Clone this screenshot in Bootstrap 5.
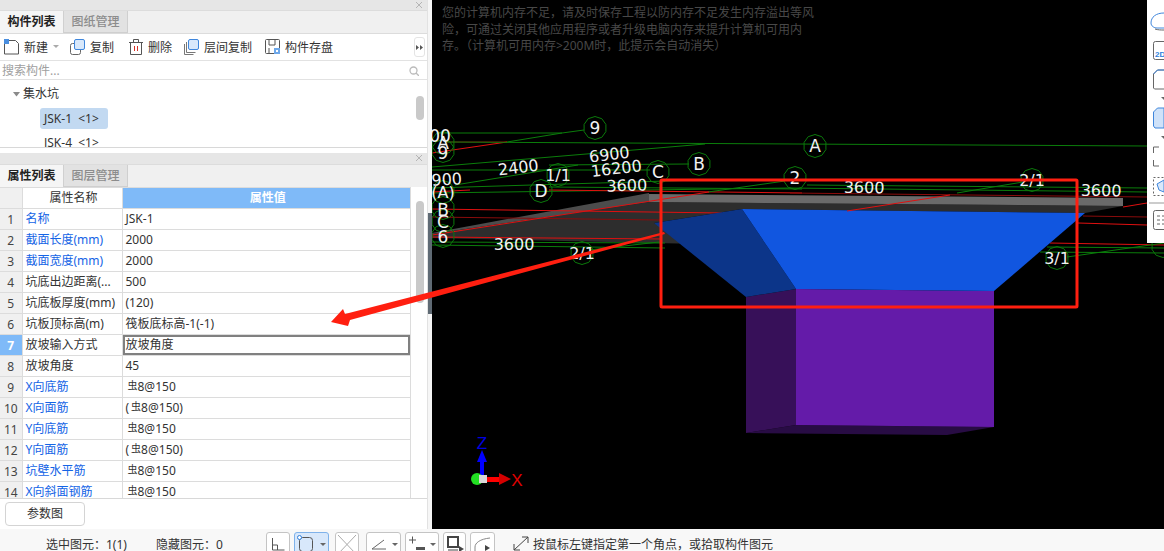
<!DOCTYPE html>
<html lang="zh">
<head>
  <meta charset="UTF-8">
  <title>构件列表</title>
  <link href="https://cdn.jsdelivr.net/npm/bootstrap@5.3.3/dist/css/bootstrap.min.css" rel="stylesheet">
  <style>
    html, body { height: 551px; overflow: hidden; }
    body { font: 12px/1.2 "Noto Sans", "Noto Sans CJK SC", sans-serif; color: #333; background: #fff; }
    .app-shell { width: 1164px; height: 551px; position: relative; overflow: hidden; }
    .main-area { height: 529px; }
    .left-side { width: 432px; flex: none; background: #fff; }
    .side-inner { width: 428px; flex: none; border-right: 1px solid #e2e2e2; }
    .splitter { width: 4px; flex: none; background: #f6f6f6; position: relative; }
    .splitter-grip { position: absolute; left: 0; top: 213px; width: 4px; height: 101px; background: #5f6a74; }
    .dock-bar { height: 10px; background: #e6e6e6; position: relative; }
    .dock-low { height: 11px; }
    .close-x { position: absolute; right: 3px; top: 0; width: 10px; height: 10px; stroke: #b5b5b5; }
    .tab-row { height: 23px; background: #f0f0f0; border-top: 1px solid #dcdcdc; }
    .tab-on, .tab-off { width: 64px; height: 22px; font-size: 12px; line-height: 21px; text-align: center; }
    .tab-on { color: #222; font-weight: 700; background: #f5f5f5; border-right: 1px solid #d0d0d0; }
    .tab-off { color: #8c8c8c; font-weight: 500; background: #e2e2e2; border-right: 1px solid #cfcfcf; border-bottom: 1px solid #cfcfcf; }
    .tool-row { height: 28px; background: #fff; border-top: 1px solid #dcdcdc; border-bottom: 1px solid #e2e2e2; padding: 1px 0 0 4px; position: relative; }
    .tool-item { gap: 5px; font-size: 12px; color: #333; margin-right: 13px; }
    .tool-item span { padding-top: 2px; }
    .tool-first { gap: 5px; margin-right: 11px; }
    .tool-wide { margin-right: 15px; }
    .tool-tight { margin-right: 12px; }
    .tool-more { position: absolute; right: 2px; top: 3px; width: 11px; height: 20px; border: 1px solid #e4e4e4; border-radius: 3px; }
    .search-row { height: 19px; background: #fff; border-bottom: 1px solid #e2e2e2; padding: 2px 8px 0 2px; color: #a0a0a0; }
    .tree-box { height: 68px; background: #fff; border-bottom: 1px solid #d8d8d8; position: relative; overflow: hidden; }
    .tree-head { position: absolute; left: 13px; top: 7px; font-size: 12px; gap: 3px; }
    .tree-node { position: absolute; left: 40px; width: 68px; height: 21px; line-height: 21px; padding-left: 4px; white-space: pre; }
    .node-on { top: 28px; background: #c2d9f1; border-radius: 3px; }
    .node-off { top: 52px; }
    .thumb { position: absolute; width: 8px; background: #c9c9c9; border-radius: 4px; }
    .thumb-tree { right: 3px; top: 16px; height: 24px; }
    .side-gap { height: 5px; background: #fff; }
    .prop-box { height: 312px; background: #fff; border-bottom: 1px solid #d8d8d8; position: relative; overflow: hidden; }
    .thumb-prop { left: 416px; top: 14px; height: 102px; }
    .prop-table { width: 411px; table-layout: fixed; border-collapse: collapse; margin: 0; font-size: 12px; }
    .prop-table td, .prop-table th { height: 21px; padding: 0 0 1px 3px; border: 1px solid #dcdcdc; font-weight: 400; white-space: nowrap; overflow: hidden; color: #333; line-height: 17px; vertical-align: middle; }
    .prop-table .num-cell { width: 22px; padding: 0; text-align: center; background: #f0f0f0; color: #444; border-left: 0; }
    .prop-table .name-cell { width: 100px; }
    .prop-table th.name-cell { text-align: center; }
    .prop-table th.value-cell { background: #7fbaf8; color: #fff; font-weight: 700; text-align: center; }
    .prop-table .link-name { color: #1464e6; }
    .prop-table .num-on { background: #7fbaf8; color: #fff; font-weight: 700; }
    .prop-table .cell-edit { box-shadow: inset 0 0 0 2px #808080; }
    .bar-sym { font-size: 10px; position: relative; top: -2px; margin-left: 2px; }
    .param-row { height: 30px; background: #fff; padding: 3px 0 0 5px; }
    .param-btn { width: 80px; height: 24px; padding: 0; font-size: 12px; color: #333; background: #fff; border: 1px solid #d4d4d4; border-radius: 4px; }
    .canvas-area { background: #000; position: relative; overflow: hidden; }
    .canvas-svg { position: absolute; left: 0; top: 0; }
    .canvas-svg .grid-labels text { font-family: "DejaVu Sans", sans-serif; }
    .axis-label { font-family: "Liberation Sans", sans-serif; font-size: 17px; }
    .mem-note { position: absolute; left: 10px; top: 5px; width: 373px; color: #484848; font-size: 12px; line-height: 16.500px; }
    .view-tools { position: absolute; right: 0; top: 0; width: 17px; height: 243px; background: #fff; }
    .status-bar { height: 22px; background: #f8f8f8; position: relative; font-size: 12px; color: #333; }
    .status-text { position: absolute; top: 9px; white-space: nowrap; }
    .stat-a { left: 46px; }
    .stat-b { left: 156px; }
    .stat-c { left: 533px; }
    .status-icons { position: absolute; left: 266px; top: 3px; gap: 4px; }
    .stat-btn { height: 24px; background: #fff; border: 1px solid #c4c4c4; border-radius: 3px; }
    .stat-on { background: #d8e8fb; border-color: #7fb2ea; }
    .stat-gap { margin-left: 2px; }
    .stat-gap-b { margin-left: 3px; }
    .corner-arrows { position: absolute; left: 513px; top: 7px; }
    .arrow-layer { position: absolute; left: 0; top: 0; pointer-events: none; }
  </style>
</head>
<body>
<div class="app-shell">
  <div class="main-area d-flex">
    <div class="left-side d-flex">
      <div class="side-inner">
        <div class="dock-bar"><svg class="close-x" viewBox="0 0 10 10"><path d="M2 2l6 6M8 2l-6 6"/></svg></div>
        <div class="tab-row d-flex">
          <div class="tab-on">构件列表</div>
          <div class="tab-off">图纸管理</div>
        </div>
        <div class="tool-row d-flex align-items-center">
          <div class="tool-item tool-first d-flex align-items-center">
            <svg width="15" height="16" viewBox="0 0 15 16"><path d="M.5 4.500v10.500h14V4.500l-3-3H5" fill="#fff" stroke="#555"/><rect x="0" y="0" width="5" height="5" fill="#4a8fe0"/></svg>
            <span>新建</span>
            <svg class="me-0" width="6" height="4" viewBox="0 0 6 4"><path d="M0 0h6L3 3z" fill="#aaa"/></svg>
          </div>
          <div class="tool-item tool-wide d-flex align-items-center">
            <svg width="15" height="16" viewBox="0 0 15 16"><rect x=".5" y="4.500" width="10" height="11" rx="2" fill="#fff" stroke="#666"/><rect x="4.500" y=".5" width="10" height="10" rx="1.500" fill="#d8e8fb" stroke="#3f86dc"/></svg>
            <span>复制</span>
          </div>
          <div class="tool-item tool-tight d-flex align-items-center">
            <svg width="14" height="16" viewBox="0 0 14 16"><path d="M0 3.500h14M4.500 3.500v-3h5v3M1.500 3.500v12h11v-12" fill="none" stroke="#555"/><path d="M5.500 7v5M8.500 7v5" stroke="#d93025"/></svg>
            <span>删除</span>
          </div>
          <div class="tool-item d-flex align-items-center">
            <svg width="15" height="16" viewBox="0 0 15 16"><path d="M.5 5v10.500h9M2.500 3v10.500h9" fill="none" stroke="#777"/><rect x="4.500" y=".5" width="10" height="10" rx="1.500" fill="#d8e8fb" stroke="#3f86dc"/></svg>
            <span>层间复制</span>
          </div>
          <div class="tool-item d-flex align-items-center">
            <svg width="15" height="16" viewBox="0 0 15 16"><rect x=".5" y=".5" width="14" height="14" rx="1" fill="#fff" stroke="#555"/><path d="M4 1v5h6V1M4 15V9" fill="none" stroke="#555"/><rect x="9" y="9" width="6" height="6" fill="#6ea8ea"/><rect x="11" y="11" width="2" height="2" fill="#fff"/></svg>
            <span>构件存盘</span>
          </div>
          <div class="tool-more d-flex align-items-center justify-content-center">
            <svg width="7" height="5" viewBox="0 0 7 5"><path d="M0 0l3 2.500-3 2.500zM4 0l3 2.500-3 2.500z" fill="#555"/></svg>
          </div>
        </div>
        <div class="search-row d-flex align-items-center justify-content-between">
          <span>搜索构件...</span>
          <svg width="10" height="10" viewBox="0 0 10 10"><circle cx="4.500" cy="4.500" r="3.500" fill="none" stroke="#bbb" stroke-width="1.300"/><path d="M7 7l3 3" stroke="#bbb" stroke-width="1.300"/></svg>
        </div>
        <div class="tree-box">
          <div class="tree-head d-flex align-items-center">
            <svg width="7" height="5" viewBox="0 0 7 5"><path d="M0 0h7L3.500 4.500z" fill="#8a8a8a"/></svg>
            <span>集水坑</span>
          </div>
          <div class="tree-node node-on">JSK-1  &lt;1&gt;</div>
          <div class="tree-node node-off">JSK-4  &lt;1&gt;</div>
          <div class="thumb thumb-tree"></div>
        </div>
        <div class="side-gap"></div>
        <div class="dock-bar dock-low"><svg class="close-x" viewBox="0 0 10 10"><path d="M2 2l6 6M8 2l-6 6"/></svg></div>
        <div class="tab-row d-flex">
          <div class="tab-on">属性列表</div>
          <div class="tab-off">图层管理</div>
        </div>
        <div class="prop-box">
          <table class="table prop-table">
            <thead>
              <tr><th class="num-cell"></th><th class="name-cell">属性名称</th><th class="value-cell">属性值</th></tr>
            </thead>
            <tbody id="prop-rows"></tbody>
          </table>
          <div class="thumb thumb-prop"></div>
        </div>
        <div class="param-row">
          <button type="button" class="btn param-btn">参数图</button>
        </div>
      </div>
      <div class="splitter"><div class="splitter-grip"></div></div>
    </div>
    <div class="canvas-area flex-grow-1">
      <svg class="canvas-svg" width="732" height="529" viewBox="432 0 732 529">
        <!-- slab -->
        <polygon points="432,234 649,202 1123,206 1085,213 742,209 654,223 700,244 432,238" fill="#2d2d2d"/>
        <polygon points="432,233 649,193 649,202 432,234" fill="#4c4c4c"/>
        <polygon points="649,194 1123,198 1123,206 649,202" fill="#6a6a6a"/>
        <g id="grid-lines" fill="none" stroke-width="1"></g>
        <!-- pit body -->
        <polygon points="746,433 796,425 994,427 947,435" fill="#280c44"/>
        <polygon points="746,297 796,289 796,425 746,433" fill="#371059"/>
        <polygon points="796,289 994,291 994,427 796,425" fill="#641ba9"/>
        <polygon points="654,223 742,209 796,289 746,297" fill="#0c3589"/>
        <polygon points="742,209 1085,213 994,291 796,289" fill="#1156e0"/>
        <path d="M847 211L950 195" stroke="#e01010"/>
        <g id="grid-bubbles" fill="none" stroke="#0b7a0b"></g>
        <g id="grid-text" class="grid-labels" fill="#f2f2f2" text-anchor="middle" font-size="16"></g>
        <!-- axes -->
        <path d="M482 476V462" stroke="#0000ff" stroke-width="4"/>
        <polygon points="482,450 477,462 487,462" fill="#0000ff"/>
        <path d="M487 479.500h12" stroke="#ff0000" stroke-width="5"/>
        <polygon points="511,479 499,473 499,485" fill="#d40000"/>
        <circle cx="477" cy="479" r="6" fill="#22e022"/>
        <rect x="479" y="475" width="8" height="8" fill="#d8d8d8"/>
        <text class="axis-label" x="482" y="449" fill="#0000e0" text-anchor="middle">Z</text>
        <text class="axis-label" x="517" y="486" fill="#e00000" text-anchor="middle">X</text>
      </svg>
      <div class="mem-note">您的计算机内存不足，请及时保存工程以防内存不足发生内存溢出等风险，可通过关闭其他应用程序或者升级电脑内存来提升计算机可用内存。（计算机可用内存&gt;200M时，此提示会自动消失）</div>
      <div class="view-tools">
        <svg width="17" height="243" viewBox="0 0 17 243" fill="none">
          <path d="M17 13c-8 0-13 4-13 10 0 3 3 5 6 5h7" stroke="#3f86dc"/>
          <path d="M8 29c3 1 6 1 9 1" stroke="#666"/>
          <rect x="6.500" y="41.500" width="20" height="18" rx="2" stroke="#666"/>
          <text x="8" y="57" fill="#2f7fdc" font-size="8" font-weight="700" font-family="Liberation Sans, sans-serif">2D</text>
          <path d="M6.500 88V74l4-4H17M6.500 88l1 1H17" stroke="#666"/><path d="M6.500 74l4-4H17" stroke="#3f86dc"/>
          <path d="M14 97h3v3z" fill="#666"/>
          <path d="M6.500 126v-14l4-4H17v20H8z" fill="#cfe2f9" stroke="#3f86dc"/>
          <path d="M14 136h3v3z" fill="#666"/>
          <path d="M12 147H6.500v6M6.500 160v6H12" stroke="#666"/>
          <rect x="6.500" y="177.500" width="20" height="18" stroke="#666" stroke-dasharray="2 2"/>
          <path d="M10 184l7-4v12l-5-2z" fill="#d8e8fb" stroke="#3f86dc"/>
          <path d="M2 203h15" stroke="#999"/>
          <rect x="6.500" y="210.500" width="20" height="19" rx="2" stroke="#666"/>
          <path d="M10 216h3M15 216h2M10 220h3M15 220h2M10 224h3M15 224h2" stroke="#666"/>
        </svg>
      </div>
    </div>
  </div>
  <div class="status-bar">
    <span class="status-text stat-a">选中图元：1(1)</span>
    <span class="status-text stat-b">隐藏图元：0</span>
    <div class="status-icons d-flex">
      <div class="stat-btn"><svg width="22" height="22" viewBox="0 0 22 22" fill="none" stroke="#555"><path d="M5.500 5v12h12M5.500 12h5v5"/></svg></div>
      <div class="stat-btn stat-on"><svg width="33" height="22" viewBox="0 0 33 22" fill="none"><rect x="4.500" y="4.500" width="13" height="14" rx="3" stroke="#555"/><circle cx="4.500" cy="4.500" r="2" fill="#fff" stroke="#2f7fdc"/><path d="M25 10h6l-3 3z" fill="#666"/></svg></div>
      <div class="stat-btn stat-gap"><svg width="22" height="22" viewBox="0 0 22 22" fill="none" stroke="#aaa"><path d="M2 2l18 19M20 2L2 21"/></svg></div>
      <div class="stat-btn stat-gap-b"><svg width="33" height="22" viewBox="0 0 33 22" fill="none"><path d="M5 16L17 7M5 16h14" stroke="#666"/><rect x="5" y="18" width="14" height="2" fill="#aaa"/><path d="M25 10h6l-3 3z" fill="#666"/></svg></div>
      <div class="stat-btn"><svg width="32" height="22" viewBox="0 0 32 22" fill="none"><path d="M3 7h7M6.500 3.500v7" stroke="#555"/><rect x="10" y="14" width="9" height="3" fill="#555"/><path d="M24 10h6l-3 3z" fill="#666"/></svg></div>
      <div class="stat-btn"><svg width="21" height="22" viewBox="0 0 21 22" fill="none"><rect x="4" y="4" width="10" height="10" stroke="#444" stroke-width="2"/><path d="M4 17h10" stroke="#444"/><path d="M15 13l5 3-5 3z" fill="#444"/></svg></div>
      <div class="stat-btn"><svg width="23" height="22" viewBox="0 0 23 22" fill="none"><path d="M4 20v-6c0-4 5-8 15-9" stroke="#888"/><path d="M14 12l5 3-5 3z" fill="#444"/></svg></div>
    </div>
    <svg class="corner-arrows" width="16" height="15" viewBox="0 0 16 15" fill="none" stroke="#444"><path d="M1 14L15 1M9 1h6v6M1 8v6h6"/></svg>
    <span class="status-text stat-c">按鼠标左键指定第一个角点，或拾取构件图元</span>
  </div>
  <!-- annotation arrow runs over the panel and the canvas -->
  <svg class="arrow-layer" width="1164" height="551" viewBox="0 0 1164 551">
    <polygon points="331,322 343,309 345,314 664,232 665,234 350,320 348,326" fill="#ff1f10"/>
    <rect x="661" y="180" width="416" height="127" rx="1" fill="none" stroke="#ff1f10" stroke-width="3"/>
  </svg>
</div>

<script>
  const rows = [
    ['名称', 'JSK-1', 1], ['截面长度(mm)', '2000', 1], ['截面宽度(mm)', '2000', 1],
    ['坑底出边距离(...', '500', 0], ['坑底板厚度(mm)', '(120)', 0], ['坑板顶标高(m)', '筏板底标高-1(-1)', 0],
    ['放坡输入方式', '放坡角度', 0], ['放坡角度', '45', 0],
    ['X向底筋', '#8@150', 1], ['X向面筋', '(#8@150)', 1], ['Y向底筋', '#8@150', 1], ['Y向面筋', '(#8@150)', 1],
    ['坑壁水平筋', '#8@150', 1], ['X向斜面钢筋', '#8@150', 1]
  ];
  document.getElementById('prop-rows').innerHTML = rows.map((r, i) => {
    const on = i === 6;
    const val = r[1].replace('#', '<span class="bar-sym">虫</span>');
    return `<tr><td class="num-cell${on ? ' num-on' : ''}">${i + 1}</td>` +
      `<td class="name-cell${r[2] ? ' link-name' : ''}">${r[0]}</td>` +
      `<td class="${on ? 'cell-edit' : ''}">${val}</td></tr>`;
  }).join('');

  // grid lines of the drawing: [x1, y1, x2, y2, colour]
  const G = '#0b7d0b', R = '#e01010', D = '#8a0c0c';
  const lines = [
    [439,133,562,133,G],[562,133,584,130,G],[445,142,507,142,D],[432,153,507,142,R],[507,142,562,133,G],
    [445,142,1147,146,G],[432,167,705,144,G],[432,170,650,170,G],[549,165,689,164,G],[455,185,578,165,G],
    [432,188,700,180,G],[432,193,790,188,G],[549,187,802,189,G],[549,190,802,193,R],[708,192,785,181,G],
    [432,209,722,213,R],[432,217,660,220,D],[432,235,709,192,R],[432,237,662,239,R],[432,242,665,243,G],
    [432,245,665,248,G],[589,250,659,242,G],[807,185,1147,188,G],[790,188,1147,192,G],[957,193,1023,182,G],
    [790,193,1147,197,D],[1123,207,1147,203,R],[1083,216,1147,217,D],[1078,223,1147,225,R],
    [1050,243,1164,245,R],[1040,252,1164,253,G],[1067,257,1164,243,G],[1047,247,1164,248,G],[432,192,470,190,R]
  ];
  document.getElementById('grid-lines').innerHTML = lines.map(l =>
    `<line x1="${l[0]}" y1="${l[1]}" x2="${l[2]}" y2="${l[3]}" stroke="${l[4]}"/>`).join('');

  // axis bubbles are ten sided
  const bubbles = [[595,128],[443,143],[443,151],[815,146],[699,164],[658,172],[541,191],[558,175],[795,178],
    [1032,180],[582,253],[1057,258],[443,192],[443,208],[443,221],[443,236],[1163,246]];
  const hex = (x, y, r) => Array.from({length: 10}, (_, k) => {
    const a = k * Math.PI / 5;
    return (x + r * Math.sin(a)).toFixed(1) + ',' + (y - r * Math.cos(a)).toFixed(1);
  }).join(' ');
  document.getElementById('grid-bubbles').innerHTML = bubbles.map(b =>
    `<polygon points="${hex(b[0], b[1], 11.5)}"/>`).join('');

  // [x, baseline, text, angle, size]
  const labels = [[595,134,'9',0,17],[443,149,'A',0,17],[443,159,'9',0,17],[815,152,'A',0,17],[699,170,'B',0,17],
    [658,178,'C',0,17],[541,197,'D',0,17],[558,181,'1/1',0,16],[795,184,'2',0,17],[1032,186,'2/1',0,16],
    [582,259,'2/1',0,16],[1057,264,'3/1',0,16],[443,198,'(A)',0,16],[443,216,'B',0,17],[443,228,'C',0,17],
    [443,243,'6',0,17],[440,142,'00',0,17],[447,185,'900',-3,16],[519,173,'2400',-7,16],[610,160,'6900',-7,16],
    [617,174,'16200',-7,16],[627,191,'3600',-2,16],[864,193,'3600',1,16],[1101,196,'3600',1,16],[514,250,'3600',0,16]];
  document.getElementById('grid-text').innerHTML = labels.map(t =>
    `<text x="${t[0]}" y="${t[1]}" font-size="${t[4]}" transform="rotate(${t[3]} ${t[0]} ${t[1]})">${t[2]}</text>`).join('');
</script>
<script src="https://cdn.jsdelivr.net/npm/bootstrap@5.3.3/dist/js/bootstrap.bundle.min.js"></script>
</body>
</html>
